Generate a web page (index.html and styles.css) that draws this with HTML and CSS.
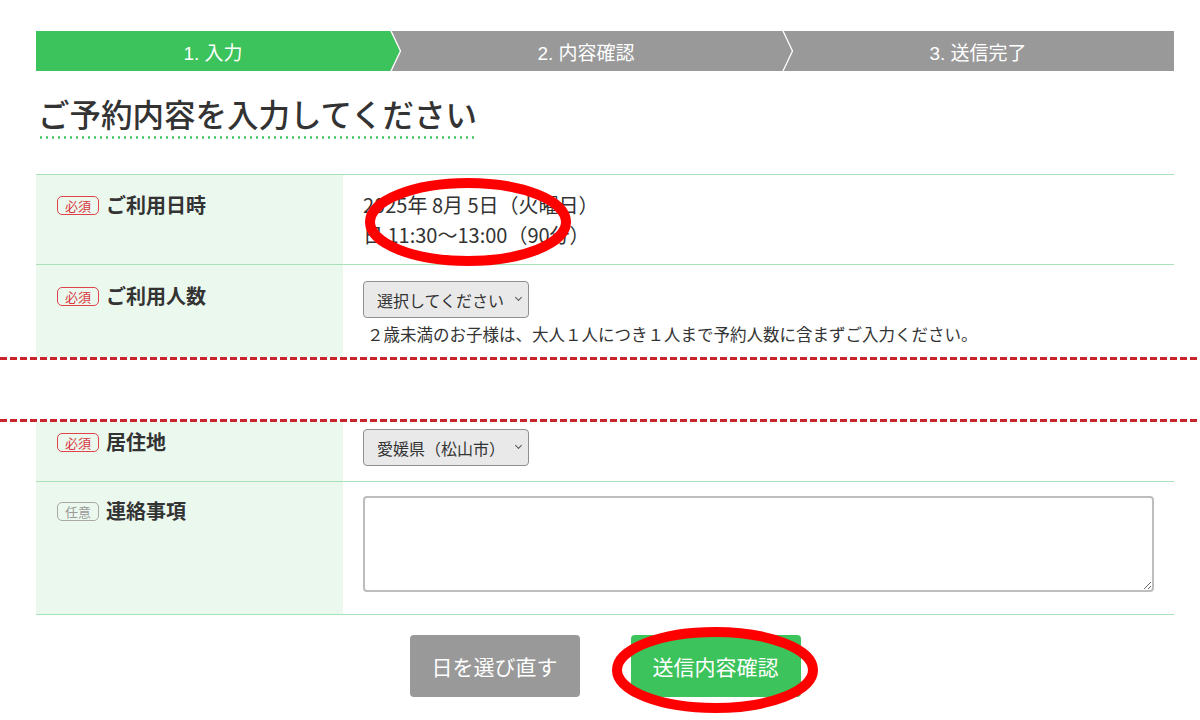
FILE: index.html
```html
<!DOCTYPE html>
<html lang="ja">
<head>
    <meta charset="UTF-8">
    <meta name="viewport" content="width=device-width, initial-scale=1.0">
    <title>ご予約内容の入力</title>
    <link rel="stylesheet" href="styles.css">
</head>
<body>
    <div class="page">
        <ol class="steps">
            <li class="step step--current">1. 入力</li>
            <li class="step">
                <svg class="chev" viewBox="0 0 12 40" width="12" height="40">
                    <path d="M0 0 L10 20 L0 40 Z" fill="#3cc35b"/>
                    <path d="M1 0 L10.5 20 L1 40" fill="none" stroke="#fff" stroke-width="1.3"/>
                </svg>
                2. 内容確認
            </li>
            <li class="step">
                <svg class="chev" viewBox="0 0 12 40" width="12" height="40">
                    <path d="M1 0 L10.5 20 L1 40" fill="none" stroke="#fff" stroke-width="1.3"/>
                </svg>
                3. 送信完了
            </li>
        </ol>

        <h1 class="title">ご予約内容を入力してください</h1>

        <div class="form">
            <div class="row row--first">
                <div class="row-label"><span class="badge">必須</span>ご利用日時</div>
                <div class="row-value">
                    2025年 8月 5日（火曜日）<br>
                    日 11:30〜13:00（90分）
                </div>
            </div>
            <div class="row row--cut">
                <div class="row-label"><span class="badge">必須</span>ご利用人数</div>
                <div class="row-value">
                    <div class="select">
                        <select>
                            <option>選択してください</option>
                        </select>
                    </div>
                    <p class="note">２歳未満のお子様は、大人１人につき１人まで予約人数に含まずご入力ください。</p>
                </div>
            </div>
        </div>

        <div class="cut"></div>

        <div class="form form--resume">
            <div class="row row--resume">
                <div class="row-label"><span class="badge">必須</span>居住地</div>
                <div class="row-value">
                    <div class="select">
                        <select>
                            <option>愛媛県（松山市）</option>
                        </select>
                    </div>
                </div>
            </div>
            <div class="row row--memo">
                <div class="row-label"><span class="badge badge--optional">任意</span>連絡事項</div>
                <div class="row-value">
                    <textarea class="memo"></textarea>
                </div>
            </div>
        </div>

        <div class="actions">
            <button class="btn btn--back">日を選び直す</button>
            <button class="btn btn--next">送信内容確認</button>
        </div>
    </div>

    <svg class="marks" width="1200" height="720" viewBox="0 0 1200 720">
        <ellipse cx="468" cy="222" rx="98" ry="39" fill="none" stroke="#f00" stroke-width="10"/>
        <ellipse cx="715" cy="670" rx="98" ry="38" fill="none" stroke="#f00" stroke-width="10"/>
    </svg>
</body>
</html>
```

FILE: styles.css
```css
body {
    margin: 0;
    background: #fff;
    color: #333;
    font-family: 'Noto Sans CJK JP', sans-serif;
}

.page {
    width: 1138px;
    margin-left: 36px;
    padding-top: 31px;
}

/* steps */
.steps {
    display: grid;
    grid-template-columns: 354px 1fr 1fr;
    height: 40px;
    margin: 0;
    padding: 0;
    list-style: none;
    background: #999;
}

.step {
    position: relative;
    display: flex;
    align-items: center;
    justify-content: center;
    color: #fff;
    font-family: 'Liberation Sans', 'Noto Sans CJK JP', sans-serif;
    font-size: 19px;
}

.step--current {
    background: #3cc35b;
}

.chev {
    position: absolute;
    left: 0;
    top: 0;
}

/* heading */
.title {
    display: inline-block;
    margin: 22px 0 0 2px;
    padding-bottom: 6px;
    font-size: 31.5px;
    font-weight: 500;
    line-height: 40px;
    color: #333;
    background-image: radial-gradient(circle, #3cc35b 1px, transparent 1.4px);
    background-size: 6px 3px;
    background-repeat: repeat-x;
    background-position: left bottom;
}

/* form table */
.form {
    margin-top: 35px;
    border-top: 1px solid #a9e2b8;
}

.form--resume {
    margin-top: 0;
    border-top: none;
}

.row {
    display: grid;
    grid-template-columns: 307px 1fr;
    border-bottom: 1px solid #a9e2b8;
}

.row-label {
    display: flex;
    align-items: flex-start;
    gap: 7px;
    padding: 16px 20px 16px 21px;
    background: #ebf8ee;
    font-size: 20px;
    font-weight: 700;
    line-height: 30px;
}

.row-value {
    padding: 16px 20px 16px;
    font-size: 20px;
    line-height: 30px;
}

.row--first .row-label,
.row--first .row-value {
    padding-top: 15px;
    padding-bottom: 14px;
}

.row--cut {
    border-bottom: none;
}

.row--cut .row-value,
.row--cut .row-label {
    padding-bottom: 11px;
}

.row--resume .row-label,
.row--resume .row-value {
    padding-top: 7px;
    padding-bottom: 15px;
}

.row--resume .row-label {
    padding-top: 5px;
}

.row--memo .row-label,
.row--memo .row-value {
    padding-top: 14px;
    padding-bottom: 14px;
}

.badge {
    flex: none;
    margin-top: 6px;
    padding: 0 7px;
    border: 1px solid #e0434a;
    border-radius: 5px;
    color: #d9363e;
    font-size: 13px;
    font-weight: 400;
    line-height: 17px;
}

.badge--optional {
    border-color: #a8a8a8;
    color: #9a9a9a;
}

/* selects */
.select {
    position: relative;
    width: 166px;
}

.select select {
    appearance: none;
    display: block;
    width: 166px;
    height: 37px;
    padding: 0 24px 0 13px;
    border: 1px solid #8f8f8f;
    border-radius: 4px;
    background: #e9e9e9;
    color: #333;
    font-family: 'Noto Sans CJK JP', sans-serif;
    font-size: 16px;
}

.select::after {
    content: "";
    position: absolute;
    right: 8px;
    top: 14px;
    width: 4px;
    height: 4px;
    border-right: 1px solid #555;
    border-bottom: 1px solid #555;
    transform: rotate(45deg);
}

.note {
    margin: 4px 0 0 4px;
    font-size: 16.5px;
    line-height: 24px;
}

.memo {
    display: block;
    box-sizing: border-box;
    width: 100%;
    height: 96px;
    margin-bottom: 8px;
    border: 2px solid #bdbdbd;
    border-radius: 4px;
    resize: both;
}

/* omitted part */
.cut {
    width: 1200px;
    height: 65px;
    margin-left: -36px;
    background-image:
        repeating-linear-gradient(90deg, #c9232b 0 7px, transparent 7px 10px),
        repeating-linear-gradient(90deg, #c9232b 0 7px, transparent 7px 10px);
    background-size: 100% 3px, 100% 3px;
    background-position: left top, left bottom;
    background-repeat: no-repeat;
}

/* buttons */
.actions {
    display: flex;
    justify-content: center;
    gap: 51px;
    margin-top: 20px;
}

.btn {
    width: 170px;
    height: 62px;
    border: none;
    border-radius: 4px;
    color: #fff;
    font-family: 'Noto Sans CJK JP', sans-serif;
    font-size: 21px;
    cursor: pointer;
}

.btn--back {
    background: #999;
}

.btn--next {
    background: #3cc35b;
}

.marks {
    position: absolute;
    left: 0;
    top: 0;
    pointer-events: none;
}
```
